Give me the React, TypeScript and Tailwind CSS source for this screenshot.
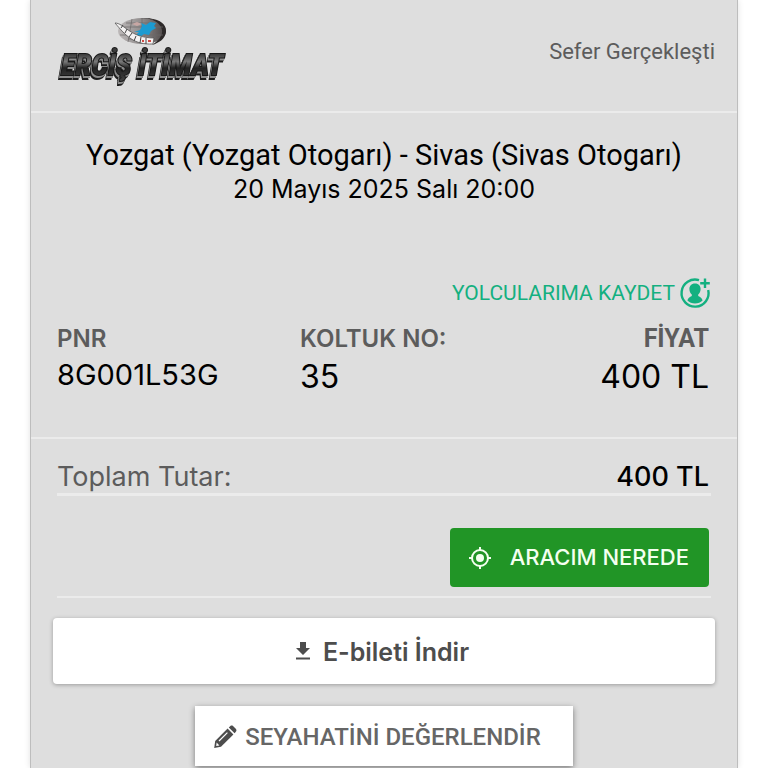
import {FC, JSX} from "react";

const TICKET = {
  status: "Sefer Gerçekleşti",
  route: "Yozgat (Yozgat Otogarı) - Sivas (Sivas Otogarı)",
  date: "20 Mayıs 2025 Salı 20:00",
  pnr: "8G001L53G",
  seat: "35",
  price: "400 TL",
  total: "400 TL",
};

const CompanyLogo: FC = (): JSX.Element => (
  <svg width="180" height="76" viewBox="0 0 180 76" role="img" aria-label="Erciş İtimat">
    <defs>
      <linearGradient id="metal" x1="0" y1="0" x2="0" y2="1">
        <stop offset="0.2" stopColor="#3a3a3a" />
        <stop offset="0.42" stopColor="#7a7a7a" />
        <stop offset="0.6" stopColor="#222" />
        <stop offset="1" stopColor="#444" />
      </linearGradient>
      <linearGradient id="globe" x1="0" y1="0" x2="1" y2="0">
        <stop offset="0" stopColor="#bdb9b9" />
        <stop offset="0.5" stopColor="#8f8b8b" />
        <stop offset="1" stopColor="#4b4646" />
      </linearGradient>
    </defs>
    <g transform="translate(1 0)">
      <ellipse cx="86" cy="19" rx="24" ry="13" fill="url(#globe)" />
      <path d="M84 6C103 5 111 12 110 20C109 27 103 31 96 33C105 27 108 21 105 15C102 9 94 6 84 6Z" fill="#2d2929" />
      <path d="M70 11H101M64 15H107M64 23H107M72 27H99M76 7L72 30M86 6V32M96 7L99 30" stroke="#6c6767" strokeWidth="0.7" fill="none" />
      <path d="M78 20L84 18L86 14L85 11L90 13L94 10L100 11L98 14L100 16L95 19L93 23L88 22L84 25L80 23L83 20Z" fill="#1b9bd1" />
      <path d="M76 12L81 10L86 12L81 14Z" fill="#c7a7a4" />
      <path d="M59 11C68 11 74 26 98 26L97 32C78 33 70 24 59 11Z" fill="#f4f2f2" stroke="#555" strokeWidth="0.8" />
      <path d="M65 16L67 13M69 21L71 17M73 25L76 21M78 29L80 24M84 31L85 25M90 32V26" stroke="#444" strokeWidth="1" />
      <path d="M86 29H88M92 29H95" stroke="#d34a43" strokeWidth="2" />
    </g>
    <text
      x="6"
      y="63"
      fontSize="30"
      fill="url(#metal)"
      stroke="#181818"
      strokeWidth="2"
      className="font-['Roboto_Condensed','Roboto',sans-serif] font-bold italic [paint-order:stroke] [filter:drop-shadow(-1px_2px_0_#8c8c8c)_drop-shadow(-1px_2px_0_#1c1c1c)]"
    >
      ERCİŞ İTİMAT
    </text>
  </svg>
);

const PassengerIcon: FC = (): JSX.Element => (
  <svg width="32" height="32" viewBox="0 0 32 32" fill="none" aria-hidden="true">
    <path d="M20 3.2A13.5 13.5 0 1 0 29.2 13" stroke="#14b080" strokeWidth="2.4" />
    <path d="M26 1.5V11M21.2 6.2H30.8" stroke="#14b080" strokeWidth="2.4" />
    <path
      d="M16 6.6C12.2 6.6 10.4 9.2 10.4 12C10.4 14.4 11.4 16.4 12.8 17.6V19C10.8 19.8 8.8 21.2 8.4 23.4C10.4 25.2 13 26.4 16 26.4S21.6 25.2 23.6 23.4C23.2 21.2 21.2 19.8 19.2 19V17.6C20.6 16.4 21.6 14.4 21.6 12C21.6 9.2 19.8 6.6 16 6.6Z"
      fill="#14b080"
    />
  </svg>
);

const LocateIcon: FC = (): JSX.Element => (
  <svg width="24" height="24" viewBox="0 0 24 24" fill="none" aria-hidden="true">
    <circle cx="12" cy="12" r="8" stroke="#f4fff0" strokeWidth="2" />
    <circle cx="12" cy="12" r="4" fill="#f4fff0" />
    <path d="M12 1V5M12 19V23M1 12H5M19 12H23" stroke="#f4fff0" strokeWidth="2" />
  </svg>
);

const DownloadIcon: FC = (): JSX.Element => (
  <svg width="16" height="24" viewBox="0 0 16 24" fill="#4d4d4d" aria-hidden="true">
    <path d="M5 1H11V7H15L8 14L1 7H5Z" />
    <path d="M1 16.5H15V18.5H1Z" />
  </svg>
);

const PencilIcon: FC = (): JSX.Element => (
  <svg width="24" height="24" viewBox="0 0 24 24" aria-hidden="true">
    <path d="M14.6 3.6L20.4 9.4L8 21.8L1.2 23L2.2 16Z" fill="#4d4d4d" />
    <path d="M15.8 2.4L17.4 1C18.2 0.4 19.2 0.4 20 1L23 4C23.6 4.8 23.6 5.8 23 6.6L21.6 8.2Z" fill="#4d4d4d" />
    <path d="M6 16L14.4 7.6" stroke="#fff" strokeWidth="1.2" />
    <path d="M3.6 17.6L6.4 20.4L3.2 21Z" fill="#fff" />
  </svg>
);

const App: FC = (): JSX.Element => {
  return (
    <main className="min-h-screen bg-white px-[30px] font-['Roboto',sans-serif]">
      <article className="min-h-screen border-x border-[#bdbdbd] bg-[#dedede] shadow-[0_0_6px_rgba(0,0,0,0.12)]">
        <header className="flex h-[113px] items-start justify-between border-b-2 border-[#ebebeb] pt-3 pr-[22px] pl-6">
          <CompanyLogo />
          <p className="pt-6 text-[22px] leading-8 text-[#5c5c5c]">{TICKET.status}</p>
        </header>

        <section className="border-b-2 border-[#ebebeb] px-[26px] pt-6 pb-10">
          <div className="text-center text-black">
            <h1 className="text-[29px] leading-9">{TICKET.route}</h1>
            <p className="font-['Inter',sans-serif] text-[25px] leading-8">{TICKET.date}</p>
          </div>

          <div className="mt-[72px] flex justify-end">
            <button type="button" className="flex items-center gap-1 text-[21px] leading-8 text-[#14b080]">
              YOLCULARIMA KAYDET
              <PassengerIcon />
            </button>
          </div>

          <dl className="mt-3 grid grid-cols-[243px_1fr_auto] font-['Inter',sans-serif] text-black">
            <div>
              <dt className="text-[24px] leading-9 font-semibold text-[#5c5c5c]">PNR</dt>
              <dd className="text-[29px] leading-9">{TICKET.pnr}</dd>
            </div>
            <div>
              <dt className="text-[24px] leading-9 font-semibold text-[#5c5c5c]">KOLTUK NO:</dt>
              <dd className="text-[32px] leading-10">{TICKET.seat}</dd>
            </div>
            <div className="pr-[2px] text-right">
              <dt className="font-['Roboto'] text-[25px] leading-9 font-bold text-[#5c5c5c]">FİYAT</dt>
              <dd className="text-[32px] leading-10">{TICKET.price}</dd>
            </div>
          </dl>
        </section>

        <section className="px-[26px] font-['Inter',sans-serif]">
          <div className="flex h-[57px] items-end justify-between border-b-3 border-[#ebebeb] pr-[2px] text-[27px] leading-8">
            <span className="text-[#5c5c5c]">Toplam Tutar:</span>
            <span className="font-medium text-black">{TICKET.total}</span>
          </div>
          <div className="flex justify-end border-b-2 border-[#ebebeb] pt-8 pr-[2px] pb-[9px]">
            <button
              type="button"
              className="flex h-[59px] items-center gap-[18px] rounded-sm bg-[#219526] pr-5 pl-[18px] text-[22px] font-medium text-[#f4fff0]"
            >
              <LocateIcon />
              ARACIM NEREDE
            </button>
          </div>
        </section>

        <div className="flex flex-col items-center gap-[22px] px-[22px] pt-5">
          <button
            type="button"
            className="flex h-[66px] w-full items-center justify-center gap-3 rounded-sm bg-white pt-1 pr-1 font-['Inter',sans-serif] text-[25px] font-semibold text-[#4d4d4d] shadow-[0_1px_4px_rgba(0,0,0,0.3)]"
          >
            <DownloadIcon />
            E-bileti İndir
          </button>
          <button
            type="button"
            className="flex h-[60px] items-center gap-2 bg-white pt-[2px] pr-8 pl-[18px] text-[24px] font-medium text-[#666] shadow-[0_2px_6px_rgba(0,0,0,0.45)]"
          >
            <PencilIcon />
            SEYAHATİNİ DEĞERLENDİR
          </button>
        </div>
      </article>
    </main>
  );
};

export default App;
